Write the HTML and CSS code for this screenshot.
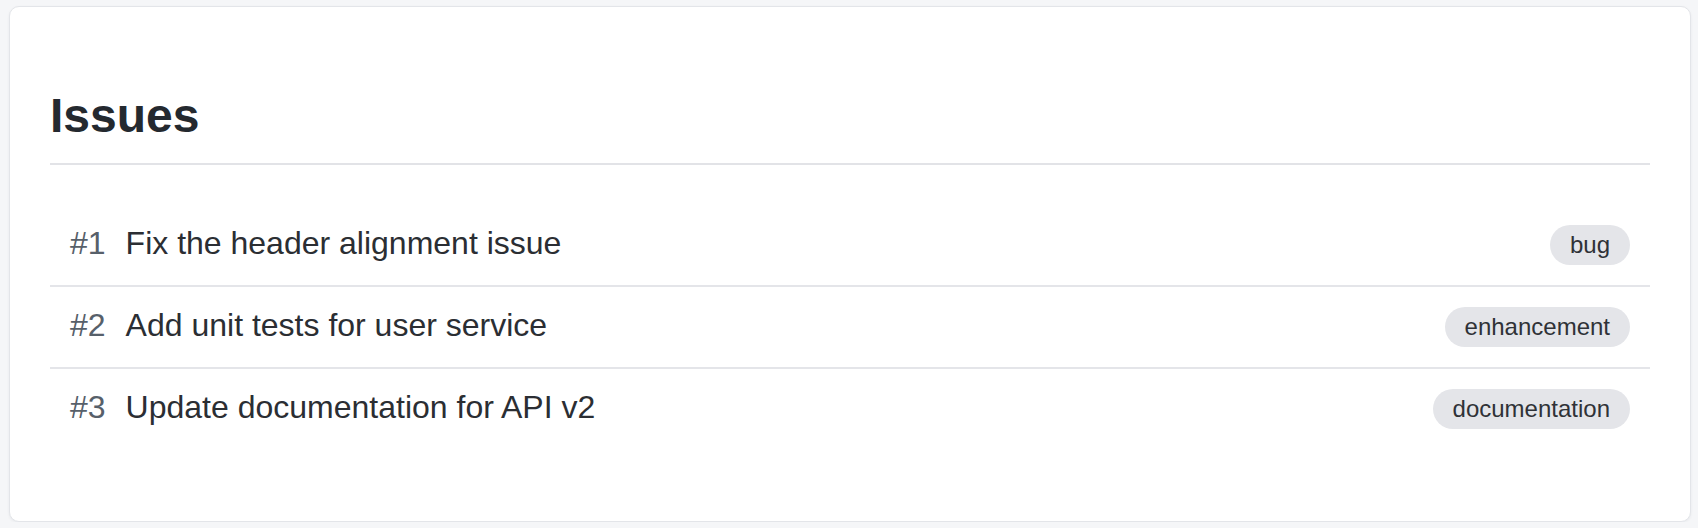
FILE: index.html
```html
<!DOCTYPE html>
<html lang="en">
<head>
<meta charset="utf-8">
<title>Issues</title>
<link rel="stylesheet" href="styles.css">
</head>
<body>
  <section class="card">
    <h1 class="title">Issues</h1>
    <ul class="issues">
      <li class="issue">
        <span class="num">#1</span>
        <span class="name">Fix the header alignment issue</span>
        <span class="tag">bug</span>
      </li>
      <li class="issue">
        <span class="num">#2</span>
        <span class="name">Add unit tests for user service</span>
        <span class="tag">enhancement</span>
      </li>
      <li class="issue">
        <span class="num">#3</span>
        <span class="name">Update documentation for API v2</span>
        <span class="tag">documentation</span>
      </li>
    </ul>
  </section>
</body>
</html>
```

FILE: styles.css
```css
* { box-sizing: border-box; }

html, body {
  margin: 0;
  background: #f5f6f8;
}

body {
  padding: 6px 7px 0 9px;
  font-family: "Liberation Sans", Arial, Helvetica, sans-serif;
}

.card {
  background: #ffffff;
  border: 1px solid #e3e5e9;
  border-radius: 10px;
  box-shadow: 0 1px 3px rgba(20, 30, 50, 0.06);
  padding: 81px 40px 40px 40px;
  height: 516px;
}

.title {
  margin: 0;
  font-size: 48px;
  line-height: 56px;
  font-weight: 700;
  color: #24292f;
  padding-bottom: 19px;
  border-bottom: 2px solid #e2e3e7;
}

.issues {
  list-style: none;
  margin: 40px 0 0 0;
  padding: 0;
}

.issue {
  display: flex;
  align-items: center;
  padding: 20px 20px 20px 20px;
  border-bottom: 2px solid #e4e5e9;
}

.issue:last-child {
  border-bottom: none;
}

.num {
  font-size: 32px;
  color: #57606a;
  margin-right: 20px;
  padding-bottom: 3px;
}

.name {
  flex: 1;
  font-size: 32px;
  color: #2b2e33;
  padding-bottom: 3px;
}

.tag {
  font-size: 24px;
  line-height: 40px;
  height: 40px;
  padding: 0 20px;
  border-radius: 20px;
  background: #e4e5e9;
  color: #2f3237;
}
```
